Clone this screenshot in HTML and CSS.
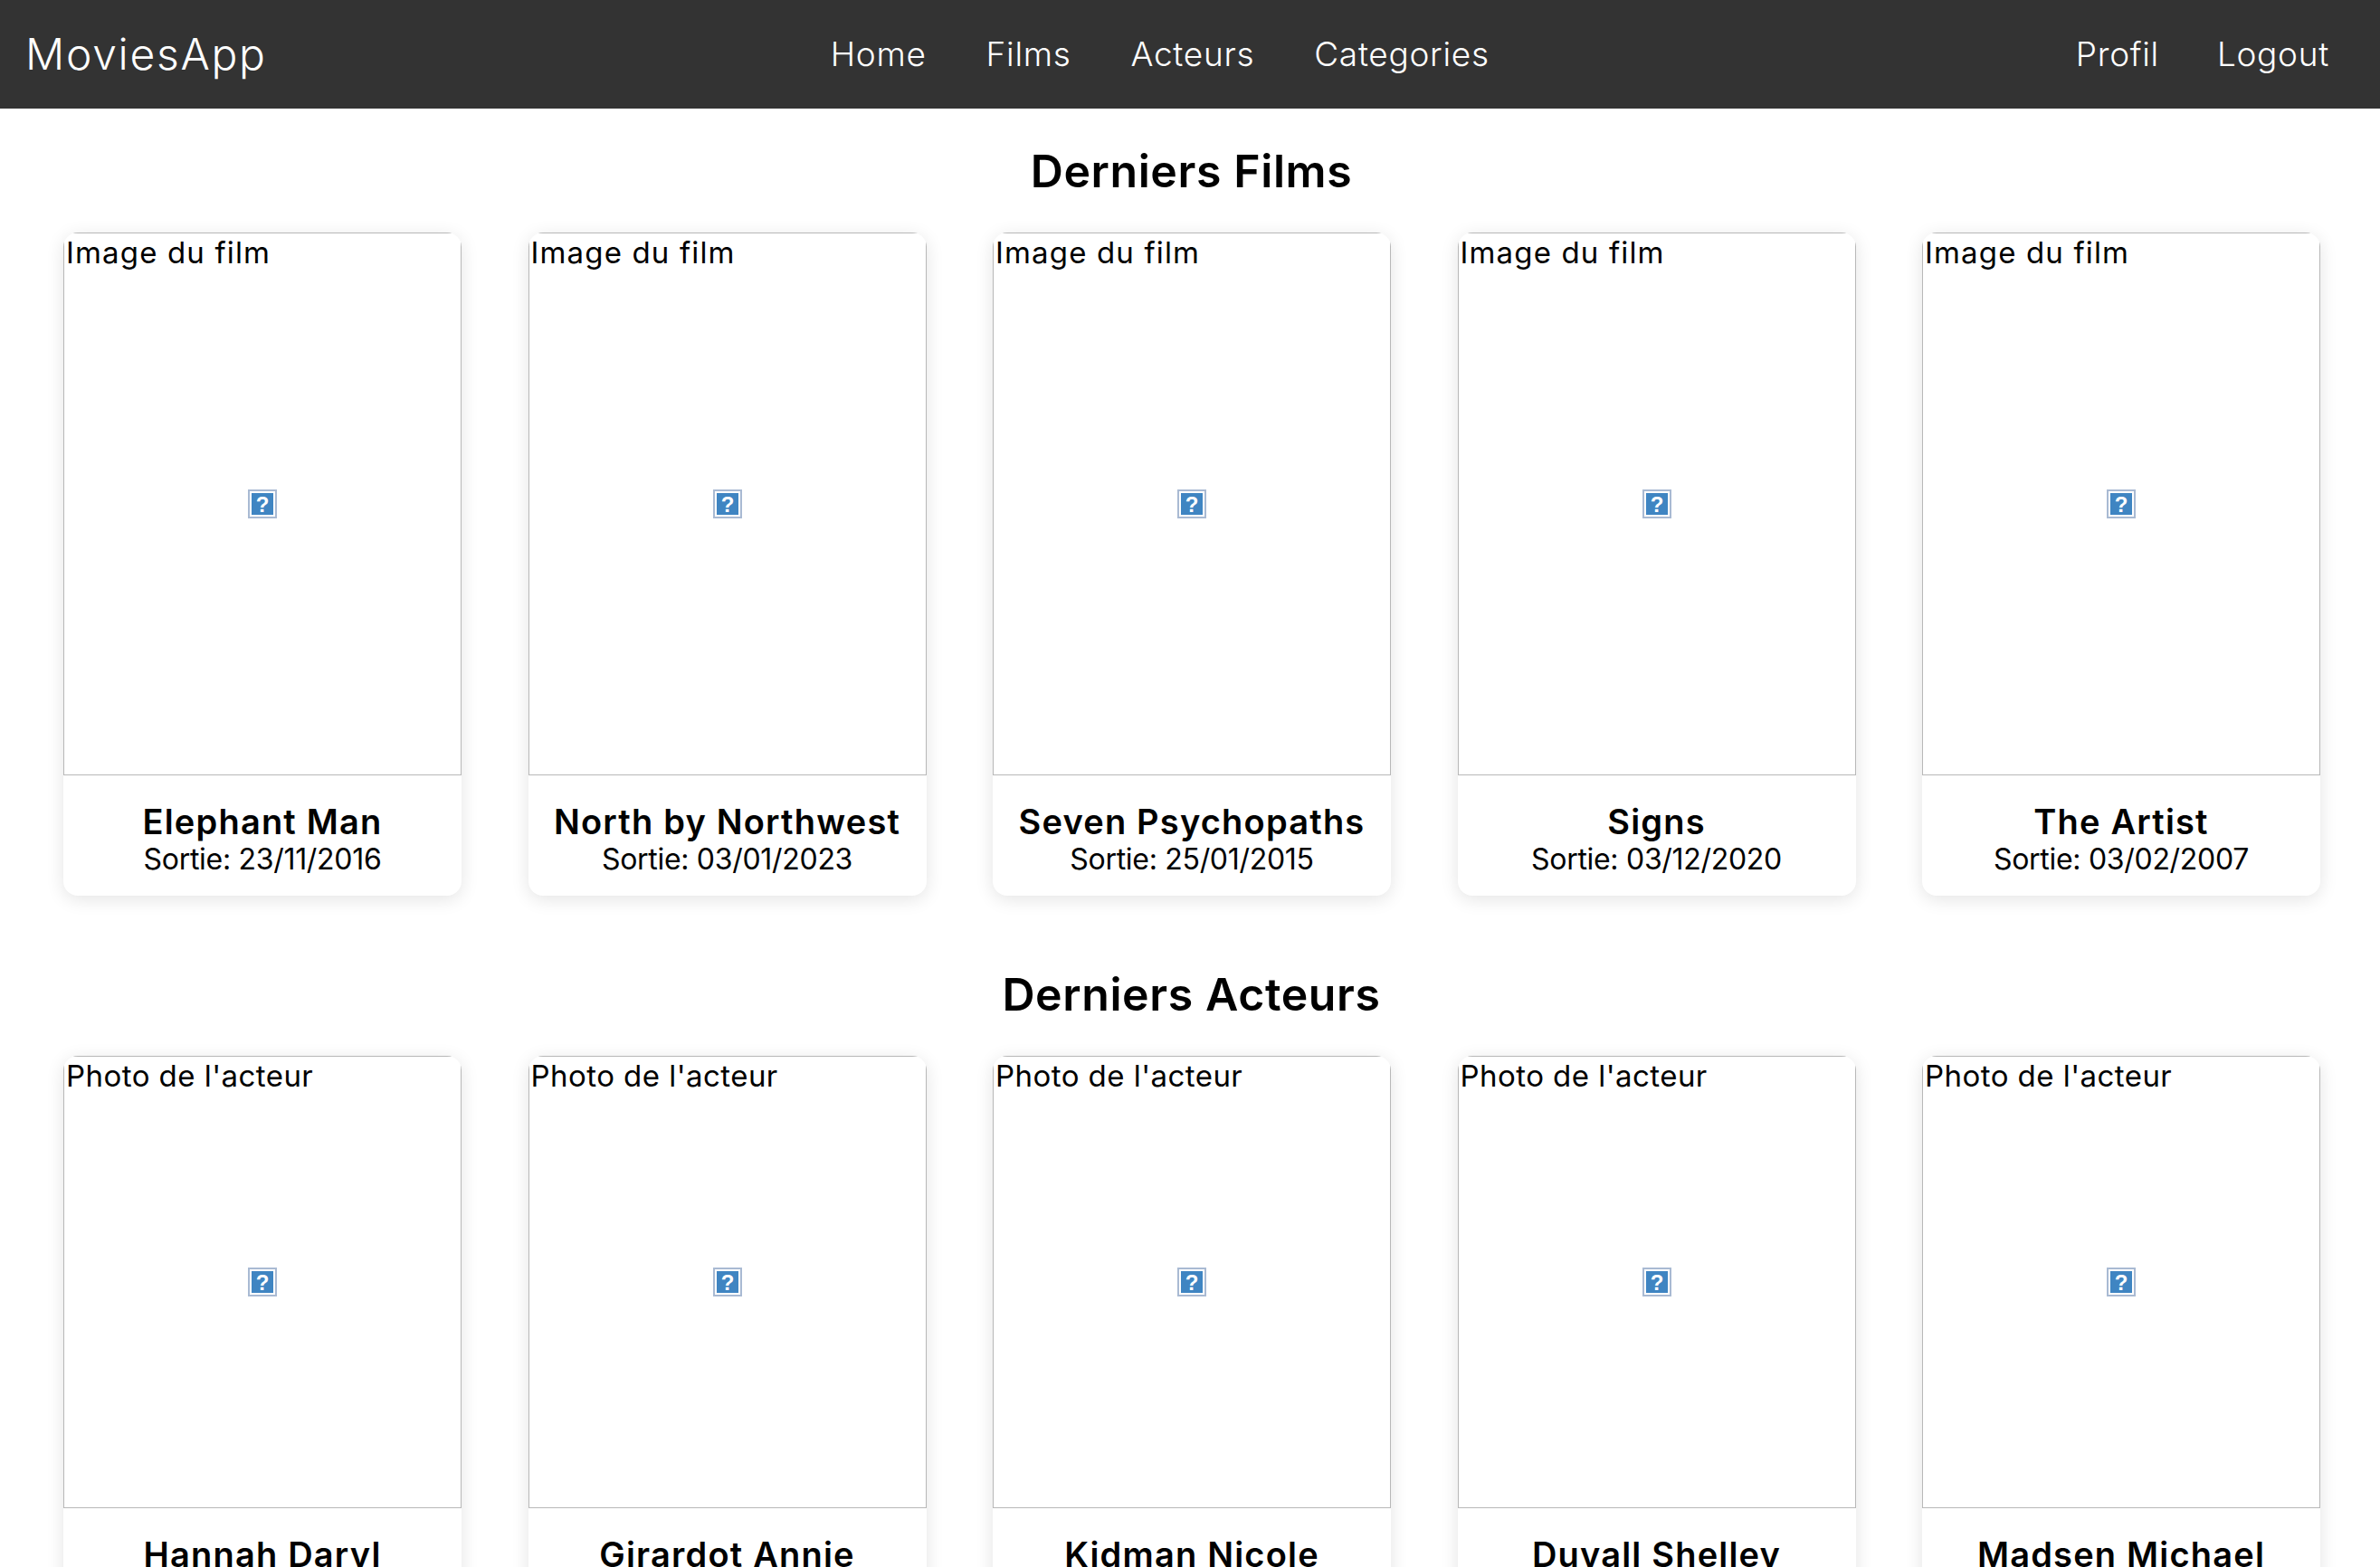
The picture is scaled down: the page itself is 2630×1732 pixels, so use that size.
FILE: index.html
```html
<!DOCTYPE html>
<html lang="fr">
<head>
<meta charset="utf-8">
<title>MoviesApp</title>
<link rel="stylesheet" href="styles.css">
</head>
<body>
<svg class="defs" width="0" height="0" aria-hidden="true">
  <symbol id="broken" viewBox="0 0 32 32">
    <rect x="1" y="1" width="30" height="30" fill="#fff" stroke="#a9bad3" stroke-width="2"/>
    <rect x="4" y="4" width="24" height="24" fill="#3f85c2"/>
    <text x="16" y="24.5" text-anchor="middle" font-family="Liberation Sans, sans-serif" font-size="24" font-weight="700" fill="#fff">?</text>
  </symbol>
</svg>
<header class="topbar">
  <a class="brand">MoviesApp</a>
  <nav class="nav nav-main">
    <a class="nav-link">Home</a>
    <a class="nav-link">Films</a>
    <a class="nav-link">Acteurs</a>
    <a class="nav-link">Categories</a>
  </nav>
  <nav class="nav">
    <a class="nav-link">Profil</a>
    <a class="nav-link">Logout</a>
  </nav>
</header>
<main class="content">
  <section class="section">
    <h2 class="section-title">Derniers Films</h2>
    <div class="card-row">
      <article class="card">
        <div class="poster poster-film"><span class="alt">Image du film</span><svg class="broken-icon"><use href="#broken"/></svg></div>
        <div class="card-body"><h3 class="card-title">Elephant Man</h3><p class="card-meta">Sortie: 23/11/2016</p></div>
      </article>
      <article class="card">
        <div class="poster poster-film"><span class="alt">Image du film</span><svg class="broken-icon"><use href="#broken"/></svg></div>
        <div class="card-body"><h3 class="card-title">North by Northwest</h3><p class="card-meta">Sortie: 03/01/2023</p></div>
      </article>
      <article class="card">
        <div class="poster poster-film"><span class="alt">Image du film</span><svg class="broken-icon"><use href="#broken"/></svg></div>
        <div class="card-body"><h3 class="card-title">Seven Psychopaths</h3><p class="card-meta">Sortie: 25/01/2015</p></div>
      </article>
      <article class="card">
        <div class="poster poster-film"><span class="alt">Image du film</span><svg class="broken-icon"><use href="#broken"/></svg></div>
        <div class="card-body"><h3 class="card-title">Signs</h3><p class="card-meta">Sortie: 03/12/2020</p></div>
      </article>
      <article class="card">
        <div class="poster poster-film"><span class="alt">Image du film</span><svg class="broken-icon"><use href="#broken"/></svg></div>
        <div class="card-body"><h3 class="card-title">The Artist</h3><p class="card-meta">Sortie: 03/02/2007</p></div>
      </article>
    </div>
  </section>
  <section class="section">
    <h2 class="section-title">Derniers Acteurs</h2>
    <div class="card-row">
      <article class="card">
        <div class="poster poster-actor"><span class="alt">Photo de l'acteur</span><svg class="broken-icon"><use href="#broken"/></svg></div>
        <div class="card-body"><h3 class="card-title">Hannah Daryl</h3></div>
      </article>
      <article class="card">
        <div class="poster poster-actor"><span class="alt">Photo de l'acteur</span><svg class="broken-icon"><use href="#broken"/></svg></div>
        <div class="card-body"><h3 class="card-title">Girardot Annie</h3></div>
      </article>
      <article class="card">
        <div class="poster poster-actor"><span class="alt">Photo de l'acteur</span><svg class="broken-icon"><use href="#broken"/></svg></div>
        <div class="card-body"><h3 class="card-title">Kidman Nicole</h3></div>
      </article>
      <article class="card">
        <div class="poster poster-actor"><span class="alt">Photo de l'acteur</span><svg class="broken-icon"><use href="#broken"/></svg></div>
        <div class="card-body"><h3 class="card-title">Duvall Shelley</h3></div>
      </article>
      <article class="card">
        <div class="poster poster-actor"><span class="alt">Photo de l'acteur</span><svg class="broken-icon"><use href="#broken"/></svg></div>
        <div class="card-body"><h3 class="card-title">Madsen Michael</h3></div>
      </article>
    </div>
  </section>
</main>
</body>
</html>
```
FILE: styles.css
```css
* { box-sizing: border-box; }
html, body { height: 100%; overflow: hidden; }
body {
  margin: 0;
  background: #fff;
  color: #000;
  font-family: Inter, "Noto Sans", sans-serif;
  font-size: 33px;
}
.defs { position: absolute; }
.topbar {
  display: flex;
  justify-content: space-between;
  align-items: center;
  height: 120px;
  padding: 0 56px 2px 28px;
  background: #333;
  color: #fff;
}
.brand { font-size: 48px; font-weight: 300; letter-spacing: 1.7px; }
.nav { display: flex; gap: 64px; }
.nav-main { gap: 66px; margin-right: 25px; }
.nav-link { font-size: 37px; font-weight: 300; letter-spacing: 0.7px; }
.content { display: flex; flex-direction: column; }
.section { padding-top: 40px; height: 910px; }
.section-title {
  margin: 0 0 39px;
  padding-left: 3px;
  height: 58px;
  line-height: 58px;
  text-align: center;
  font-size: 50px;
  font-weight: 600;
  letter-spacing: 0.6px;
}
.card-row {
  display: flex;
  justify-content: space-between;
  padding: 0 66px 0 70px;
}
.card {
  width: 440px;
  border-radius: 16px;
  background: #fff;
  box-shadow: 0 4px 20px rgba(0, 0, 0, 0.11);
  overflow: hidden;
}
.poster {
  position: relative;
  border: 1px solid #b8b8b8;
  line-height: 43px;
}
.poster-film { height: 600px; }
.poster-actor { height: 500px; }
.poster-film .alt { letter-spacing: 1.15px; }
.poster-actor .alt { letter-spacing: 0.45px; }
.alt { display: block; padding-left: 2px; }
.broken-icon {
  position: absolute;
  top: 50%;
  left: 50%;
  width: 32px;
  height: 32px;
  transform: translate(-50%, -50%);
}
.card-body { padding: 29px 12px 20px; text-align: center; }
.card-title { margin: 0; font-size: 38px; font-weight: 600; line-height: 44px; letter-spacing: 1.2px; }
.card-meta { margin: 0; font-size: 32px; line-height: 40px; letter-spacing: -0.3px; }
```
